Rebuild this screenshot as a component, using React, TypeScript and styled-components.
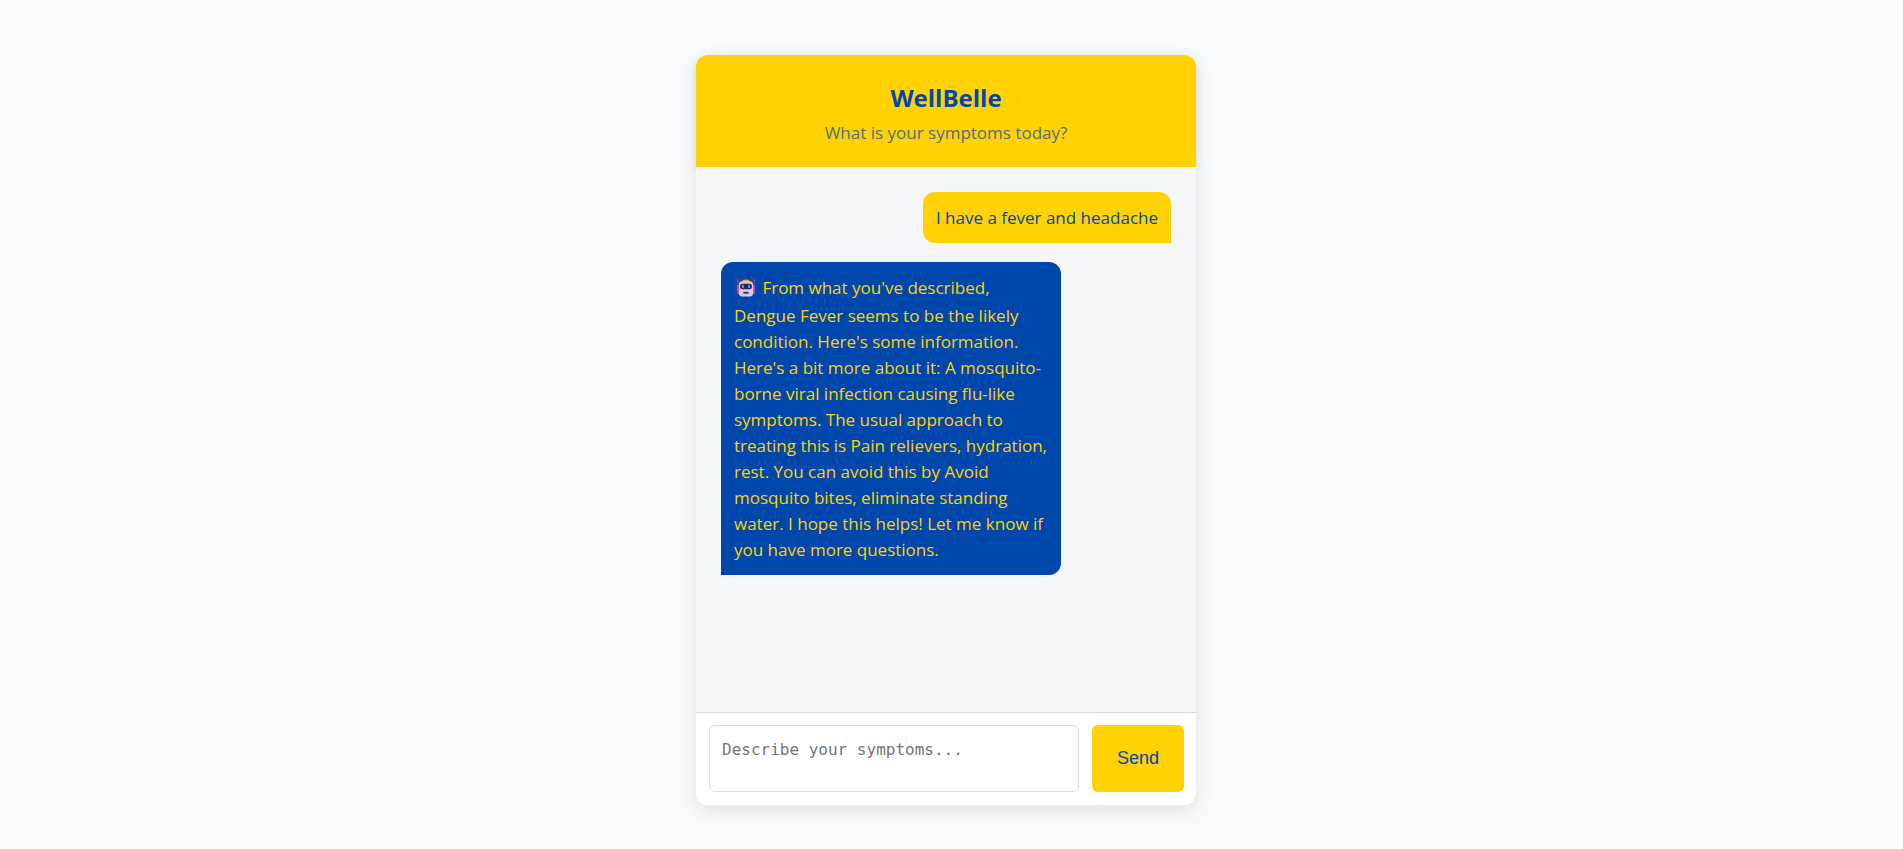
import React from "react";
import styled, { createGlobalStyle } from "styled-components";

const yellow = "#ffd204";
const blue = "#0047ab";

const GlobalStyle = createGlobalStyle`
  *, *::before, *::after { box-sizing: border-box; }
  body {
    margin: 0;
    background: #f9fafc;
    font-family: "Open Sans", "Noto Sans", sans-serif;
    font-size: 17px;
    line-height: 26px;
  }
`;

const Page = styled.main`
  min-height: 100vh;
  display: flex;
  align-items: center;
  justify-content: center;
  padding: 11px 11px 0 0;
`;

const Card = styled.section`
  display: flex;
  flex-direction: column;
  width: 100%;
  max-width: 500px;
  min-height: 750px;
  border-radius: 12px;
  background: #fff;
  box-shadow: 0 5px 20px rgba(0, 0, 0, 0.1);
`;

const Header = styled.header`
  padding: 25px 25px 21px;
  border-radius: 12px 12px 0 0;
  background: ${yellow};
  color: ${blue};
  text-align: center;
  box-shadow: 0 3px 6px rgba(0, 0, 0, 0.1);
`;

const Title = styled.h1`
  margin: 0 0 4px;
  font-size: 24px;
  line-height: 36px;
  font-weight: 700;
`;

const Subtitle = styled.p`
  margin: 0;
  opacity: 0.7;
`;

const Messages = styled.div`
  position: relative;
  flex: 1;
  display: flex;
  flex-direction: column;
  gap: 19px;
  padding: 25px;
  background: #f4f6f8;
`;

const Bubble = styled.p<{ $from: "user" | "bot" }>`
  margin: 0;
  max-width: 340px;
  padding: 13px 13px 12px;
  align-self: ${(p) => (p.$from === "user" ? "flex-end" : "flex-start")};
  border-radius: ${(p) => (p.$from === "user" ? "12px 12px 0 12px" : "12px 12px 12px 0")};
  background: ${(p) => (p.$from === "user" ? yellow : blue)};
  color: ${(p) => (p.$from === "user" ? blue : yellow)};
`;

const RobotIcon = styled.svg`
  width: 18px;
  height: 18px;
  margin: 0 3px 6px;
  vertical-align: -9px;
`;

const Composer = styled.form`
  display: flex;
  gap: 13px;
  padding: 12px 12px 13px 13px;
  border-top: 1px solid #d9d9d9;
  border-radius: 0 0 12px 12px;
  background: #fff;
`;

const Input = styled.textarea`
  flex: 1;
  min-width: 0;
  height: 67px;
  padding: 12px;
  border: 1px solid #dddddd;
  border-radius: 6px;
  background: #fff;
  color: #333;
  font: 16px/24px "DejaVu Sans Mono", monospace;
  resize: none;
  outline: none;
  &::placeholder { color: #757575; }
`;

const SendButton = styled.button`
  padding: 0 25px;
  border: 0;
  border-radius: 6px;
  background: ${yellow};
  color: ${blue};
  font: 18px "Liberation Sans", Arial, sans-serif;
  cursor: pointer;
`;

const Robot = () => (
  <RobotIcon viewBox="0 0 18 18" role="img" aria-label="Robot">
    <path d="M1 1v6M17 1v6" stroke="#8d4fae" strokeWidth="1" />
    <circle cx="1" cy="1.2" r="0.9" fill="#f8312f" />
    <circle cx="17" cy="1.2" r="0.9" fill="#f8312f" />
    <rect x="0.2" y="6" width="2.500" height="9" rx="1.200" fill="#ee4c8c" />
    <rect x="15.300" y="6" width="2.500" height="9" rx="1.200" fill="#ee4c8c" />
    <path d="M5.500 3V2Q5.500 .5 9 .5T12.500 2V3Z" fill="#f4a81d" />
    <path d="M5 2.300H13Q16 2.300 16 6V14Q16 17.500 13 17.500H5Q2 17.500 2 14V6Q2 2.300 5 2.300Z" fill="#d8cbe8" />
    <rect x="3.200" y="4.800" width="11.600" height="5.400" rx="2" fill="#2c2350" />
    <rect x="5" y="5.800" width="2" height="3.400" rx="1" fill="#26a9ec" />
    <rect x="11" y="5.800" width="2" height="3.400" rx="1" fill="#26a9ec" />
    <rect x="6.200" y="12.800" width="5.600" height="2" rx="0.800" fill="#40305c" />
  </RobotIcon>
);

export default function App() {
  return (
    <>
      <GlobalStyle />
      <Page>
        <Card>
          <Header>
            <Title>WellBelle</Title>
            <Subtitle>What is your symptoms today?</Subtitle>
          </Header>
          <Messages>
            <Bubble $from="user">I have a fever and headache</Bubble>
            <Bubble $from="bot">
              <Robot /> From what you've described, Dengue Fever seems to be the likely condition.
              Here's some information. Here's a bit more about it: A mosquito-borne viral infection
              causing flu-like symptoms. The usual approach to treating this is Pain relievers,
              hydration, rest. You can avoid this by Avoid mosquito bites, eliminate standing water.
              I hope this helps! Let me know if you have more questions.
            </Bubble>
          </Messages>
          <Composer onSubmit={(e) => e.preventDefault()}>
            <Input aria-label="Describe your symptoms" placeholder="Describe your symptoms..." />
            <SendButton type="submit">Send</SendButton>
          </Composer>
        </Card>
      </Page>
    </>
  );
}
